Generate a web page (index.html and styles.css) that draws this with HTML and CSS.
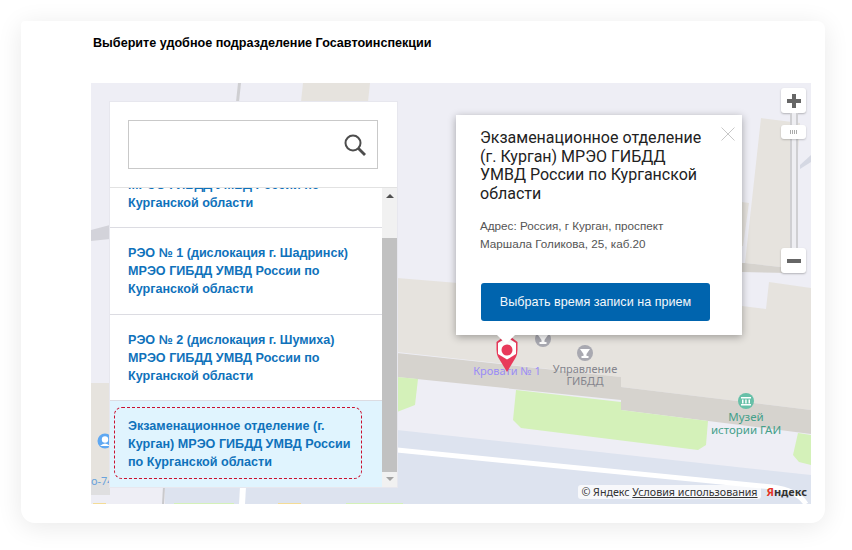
FILE: index.html
```html
<!DOCTYPE html>
<html lang="ru">
<head>
<meta charset="utf-8">
<title>Выберите удобное подразделение Госавтоинспекции</title>
<link rel="stylesheet" href="styles.css">
</head>
<body>
<main class="card">
  <h1 class="heading">Выберите удобное подразделение Госавтоинспекции</h1>
  <section class="map">
    <svg class="map-art" viewBox="91 83 720 421" width="720" height="421" aria-hidden="true">
      <rect x="91" y="83" width="720" height="421" fill="#eeeef5"/>
      <path d="M238 83h3l-2 19h-3z" fill="#cfcfd2"/>
      <path d="M303 83h67l-2 19h-67z" fill="#e6e3de"/>
      <path d="M91 230l19-5v14l-19 2z" fill="#d3d3da"/>
      <path d="M91 383h19v99H91z" fill="#e6e3de"/>
      <path d="M91 482h19v13H91z" fill="#dfdfe0"/>
      <path d="M397 278L742 306L766 309L769 282L811 288V410L621 387V377L397 352Z" fill="#e6e3de"/>
      <path d="M397 353L621 377V387L811 410V434L621 410V400L397 377Z" fill="#d6d3ce"/>
      <path d="M761 118L800 123L790 268L745 263Z" fill="#e6e3de"/>
      <path d="M745 263L790 268V273L742 272V263Z" fill="#d6d3ce"/>
      <path d="M742 202L749 203L743 246H742Z" fill="#e6e3de"/>
      <path d="M800 165L811 155V162L800 169Z" fill="#d5d8e3"/>
      <path d="M516 390L621 402V410L708 421L706 445L698 450L521 428L513 420Z" fill="#d4f1b9"/>
      <path d="M397 377L418 379L415 405L397 412Z" fill="#d4f1b9"/>
      <path d="M798 433L811 435V465L799 462L793 455Z" fill="#d4f1b9"/>
      <path d="M397 430L811 475V504H165V487H397Z" fill="#dde3ef"/>
      <path d="M240 487h6l-1 17h-6z" fill="#fff"/>
      <path d="M163 487h2l-1 17h-2z" fill="#c9c9cc"/>
      <path d="M397 450L772 487Q797 490 806 504" fill="none" stroke="#fff" stroke-width="5"/>
      <rect x="93" y="503" width="13" height="1" fill="#f4dc96"/>
      <rect x="174" y="503" width="60" height="1" fill="#d4f1b9"/>
      <rect x="278" y="503" width="23" height="1" fill="#f4dc96"/>
      <rect x="346" y="503" width="57" height="1" fill="#d4f1b9"/>
      <circle cx="105" cy="441" r="7.500" fill="#5fa8f2"/>
      <circle cx="105" cy="439.500" r="3.200" fill="#fff"/>
      <path d="M100 446q5-5 10 0z" fill="#fff"/>
      <text class="label label-road" x="91" y="485">о-74</text>
      <circle cx="543" cy="339" r="8" fill="#a9a9b1"/>
      <circle cx="585" cy="353" r="8" fill="#a9a9b1"/>
      <path d="M580 349h10l-3.500 5v2h2v2h-7v-2h2v-2z" fill="#fff"/>
      <path d="M538 335h10l-3.500 5v2h2v2h-7v-2h2v-2z" fill="#fff"/>
      <text class="label label-gray" x="585" y="373" text-anchor="middle">Управление</text>
      <text class="label label-gray" x="585" y="385" text-anchor="middle">ГИБДД</text>
      <circle cx="746" cy="401" r="8" fill="#67c0a8"/>
      <path d="M741 397h10v1.500h-10zM742 399.500h1.500v4H742zM745.200 399.500h1.500v4h-1.500zM748.500 399.500h1.500v4h-1.500zM741 404h10v1.500h-10z" fill="#fff"/>
      <text class="label label-green" x="746" y="421" text-anchor="middle">Музей</text>
      <text class="label label-green" x="746" y="434" text-anchor="middle">истории ГАИ</text>
      <text class="label label-violet" x="507" y="375" text-anchor="middle">Кровати № 1</text>
      <path d="M507 372L498 357Q496.500 354 496.500 349.500V342L503 337H511L517.500 342V349.500Q517.500 354 516 357Z" fill="#e8395a"/>
      <path d="M507 337.500L516 343V354L507 359.500L498 354V343Z" fill="#fff"/>
      <circle cx="507" cy="350" r="5.500" fill="#e8395a"/>
    </svg>

    <aside class="panel">
      <div class="search">
        <div class="search-box">
          <svg class="search-icon" viewBox="0 0 22 22" width="22" height="22" aria-hidden="true">
            <circle cx="9" cy="9" r="7.500" fill="none" stroke="#4d4d4d" stroke-width="2"/>
            <path d="M14.500 14.500L21 21" stroke="#4d4d4d" stroke-width="2.800"/>
          </svg>
        </div>
      </div>
      <div class="list-row">
        <div class="list">
          <div class="item"><a class="item-link">МРЭО ГИБДД УМВД России по Курганской области</a></div>
          <div class="item"><a class="item-link">РЭО № 1 (дислокация г. Шадринск) МРЭО ГИБДД УМВД России по Курганской области</a></div>
          <div class="item"><a class="item-link">РЭО № 2 (дислокация г. Шумиха) МРЭО ГИБДД УМВД России по Курганской области</a></div>
          <div class="item item-active"><a class="item-link">Экзаменационное отделение (г. Курган) МРЭО ГИБДД УМВД России по Курганской области</a></div>
        </div>
        <div class="scrollbar">
          <span class="arrow arrow-up"></span>
          <span class="thumb"></span>
          <span class="arrow arrow-down"></span>
        </div>
      </div>
    </aside>

    <div class="balloon">
      <button class="balloon-close" aria-label="Закрыть">
        <svg viewBox="0 0 14 14" width="14" height="14" aria-hidden="true"><path d="M.5.500l13 13M13.500.500l-13 13" stroke="#c8c8c8" stroke-width="1" fill="none"/></svg>
      </button>
      <h2 class="balloon-title">Экзаменационное отделение (г. Курган) МРЭО ГИБДД УМВД России по Курганской области</h2>
      <p class="balloon-address">Адрес: Россия, г Курган, проспект Маршала Голикова, 25, каб.20</p>
      <button class="balloon-action">Выбрать время записи на прием</button>
      <span class="balloon-tail"></span>
    </div>

    <div class="zoom">
      <button class="zoom-btn" aria-label="Приблизить">
        <svg viewBox="0 0 14 14" width="14" height="14" aria-hidden="true"><path d="M5 0h4v5h5v4H9v5H5V9H0V5h5z" fill="#666"/></svg>
      </button>
      <div class="zoom-track"><span class="zoom-thumb"></span></div>
      <button class="zoom-btn" aria-label="Отдалить">
        <svg viewBox="0 0 14 4" width="14" height="4" aria-hidden="true"><path d="M0 0h14v4H0z" fill="#666"/></svg>
      </button>
    </div>

    <div class="attribution">
      <span class="copyright">© Яндекс <a class="terms">Условия использования</a></span>
      <span class="brand"><span class="brand-red">Я</span>ндекс</span>
    </div>
  </section>
</main>
</body>
</html>
```

FILE: styles.css
```css
* { box-sizing: border-box; }

html, body { height: 100%; }

body {
  margin: 0;
  padding: 21px 27px 27px 21px;
  background: #fff;
  font-family: "Liberation Sans", Arial, sans-serif;
}

.card {
  width: 804px;
  height: 502px;
  display: flex;
  flex-direction: column;
  padding: 0 14px 19px 70px;
  background: #fff;
  border-radius: 4px 8px 14px 14px;
  box-shadow: 0 4px 26px rgba(0, 0, 0, .09);
}

.heading {
  margin: 0;
  padding: 15px 0 0 2px;
  height: 62px;
  font-size: 12.600px;
  line-height: 15px;
  font-weight: 700;
  color: #000;
}

.map {
  position: relative;
  flex: 1;
  overflow: hidden;
}

.map-art { position: absolute; inset: 0; display: block; }

.label { font-family: "Noto Sans", sans-serif; font-size: 11.500px; }
.label-gray { fill: #85858d; font-size: 11px; }
.label-green { fill: #45a08a; }
.label-violet { fill: #9a8cf6; font-size: 11px; }
.label-road { fill: #6aa3dc; font-size: 11px; }

.panel {
  position: absolute;
  left: 18px;
  top: 18px;
  width: 289px;
  height: 387px;
  display: flex;
  flex-direction: column;
  background: #fff;
  border: 1px solid #e7e7ee;
}

.search {
  flex: none;
  height: 86px;
  padding: 18px 19px 0 18px;
  border-bottom: 1px solid #e2e2e2;
}

.search-box {
  height: 49px;
  display: flex;
  align-items: center;
  justify-content: flex-end;
  padding-right: 11px;
  border: 1px solid #c9c9c9;
}

.search-icon { display: block; }

.list-row {
  flex: 1;
  min-height: 0;
  display: flex;
}

.list {
  flex: 1;
  min-width: 0;
  display: flex;
  flex-direction: column;
  justify-content: flex-end;
  overflow: hidden;
}

.item {
  flex: none;
  padding: 6px 20px 7.500px 4px;
  border-bottom: 1px solid #dcdce2;
}

.item-active {
  padding-bottom: 8px;
  background: #e0f4fe;
  border-bottom: 0;
}

.item-link {
  display: block;
  padding: 9px 8px 7px 13px;
  border: 1px solid transparent;
  border-radius: 8px;
  font-size: 12.600px;
  line-height: 18px;
  font-weight: 700;
  color: #0f72bb;
}

.item-active .item-link {
  border: 1px dashed #c9102f;
}

.scrollbar {
  flex: none;
  width: 15px;
  display: flex;
  flex-direction: column;
  align-items: center;
  background: #f1f1f1;
}

.thumb {
  flex: 1;
  width: 100%;
  background: #c1c1c1;
}

.arrow {
  flex: none;
  width: 0;
  height: 0;
  border-left: 4px solid transparent;
  border-right: 4px solid transparent;
}

.arrow-up {
  margin: 6px 0 40px;
  border-bottom: 4px solid #505050;
}

.arrow-down {
  margin: 5px 0 6px;
  border-top: 4px solid #a3a3a3;
}

.balloon {
  position: absolute;
  left: 365px;
  top: 32px;
  width: 286px;
  height: 220px;
  padding: 14px 24px 0;
  background: #fff;
  box-shadow: 0 2px 8px rgba(0, 0, 0, .32);
}

.balloon-close {
  position: absolute;
  top: 12px;
  right: 7px;
  padding: 0;
  border: 0;
  background: none;
  line-height: 0;
}

.balloon-title {
  max-width: 225px;
  margin: 0;
  font-family: Roboto, sans-serif;
  font-size: 16px;
  line-height: 18.700px;
  font-weight: 400;
  color: #222;
}

.balloon-address {
  margin: 13px 0 0;
  font-size: 11.700px;
  line-height: 18px;
  color: #555;
}

.balloon-action {
  display: block;
  width: 229px;
  height: 38px;
  margin: 30px 0 0 1px;
  padding: 0;
  border: 0;
  border-radius: 3px;
  background: #0064ae;
  color: #f4f8fb;
  font-family: "Liberation Sans", Arial, sans-serif;
  font-size: 12.600px;
}

.balloon-tail {
  position: absolute;
  left: 41px;
  top: 100%;
  width: 0;
  height: 0;
  border-left: 9.500px solid transparent;
  border-right: 9.500px solid transparent;
  border-top: 9px solid #fff;
}

.zoom {
  position: absolute;
  left: 690px;
  top: 5px;
  width: 25px;
  height: 185px;
  display: flex;
  flex-direction: column;
  align-items: center;
}

.zoom-btn {
  flex: none;
  width: 25px;
  height: 25px;
  display: flex;
  align-items: center;
  justify-content: center;
  padding: 0;
  border: 0;
  border-radius: 3px;
  background: #fff;
  box-shadow: 0 1px 2px rgba(0, 0, 0, .25);
}

.zoom-track {
  position: relative;
  flex: 1;
  width: 8px;
  background: #eeeef2;
  border-left: 2px solid #cfcfd2;
  border-right: 2px solid #cfcfd2;
}

.zoom-thumb {
  position: absolute;
  left: -10.500px;
  top: 12px;
  width: 25px;
  height: 14px;
  border-radius: 3px;
  background: #fff;
  box-shadow: 0 1px 2px rgba(0, 0, 0, .2);
}

.zoom-thumb::after {
  content: "";
  position: absolute;
  left: 9px;
  top: 5px;
  width: 8px;
  height: 4px;
  background: repeating-linear-gradient(90deg, #aaa 0 1px, transparent 1px 2px);
}

.attribution {
  position: absolute;
  right: 4px;
  bottom: 5px;
  display: flex;
  align-items: center;
  gap: 6px;
}

.copyright {
  padding: 0 3px;
  border-radius: 3px;
  background: rgba(255, 255, 255, .75);
  font-family: "Noto Sans", sans-serif;
  font-size: 10.700px;
  line-height: 14px;
  color: #333;
}

.terms { text-decoration: underline; }

.brand {
  font-family: "Noto Sans", sans-serif;
  font-size: 11px;
  line-height: 14px;
  font-weight: 700;
  color: #333;
}

.brand-red { color: #e6311f; }
```
